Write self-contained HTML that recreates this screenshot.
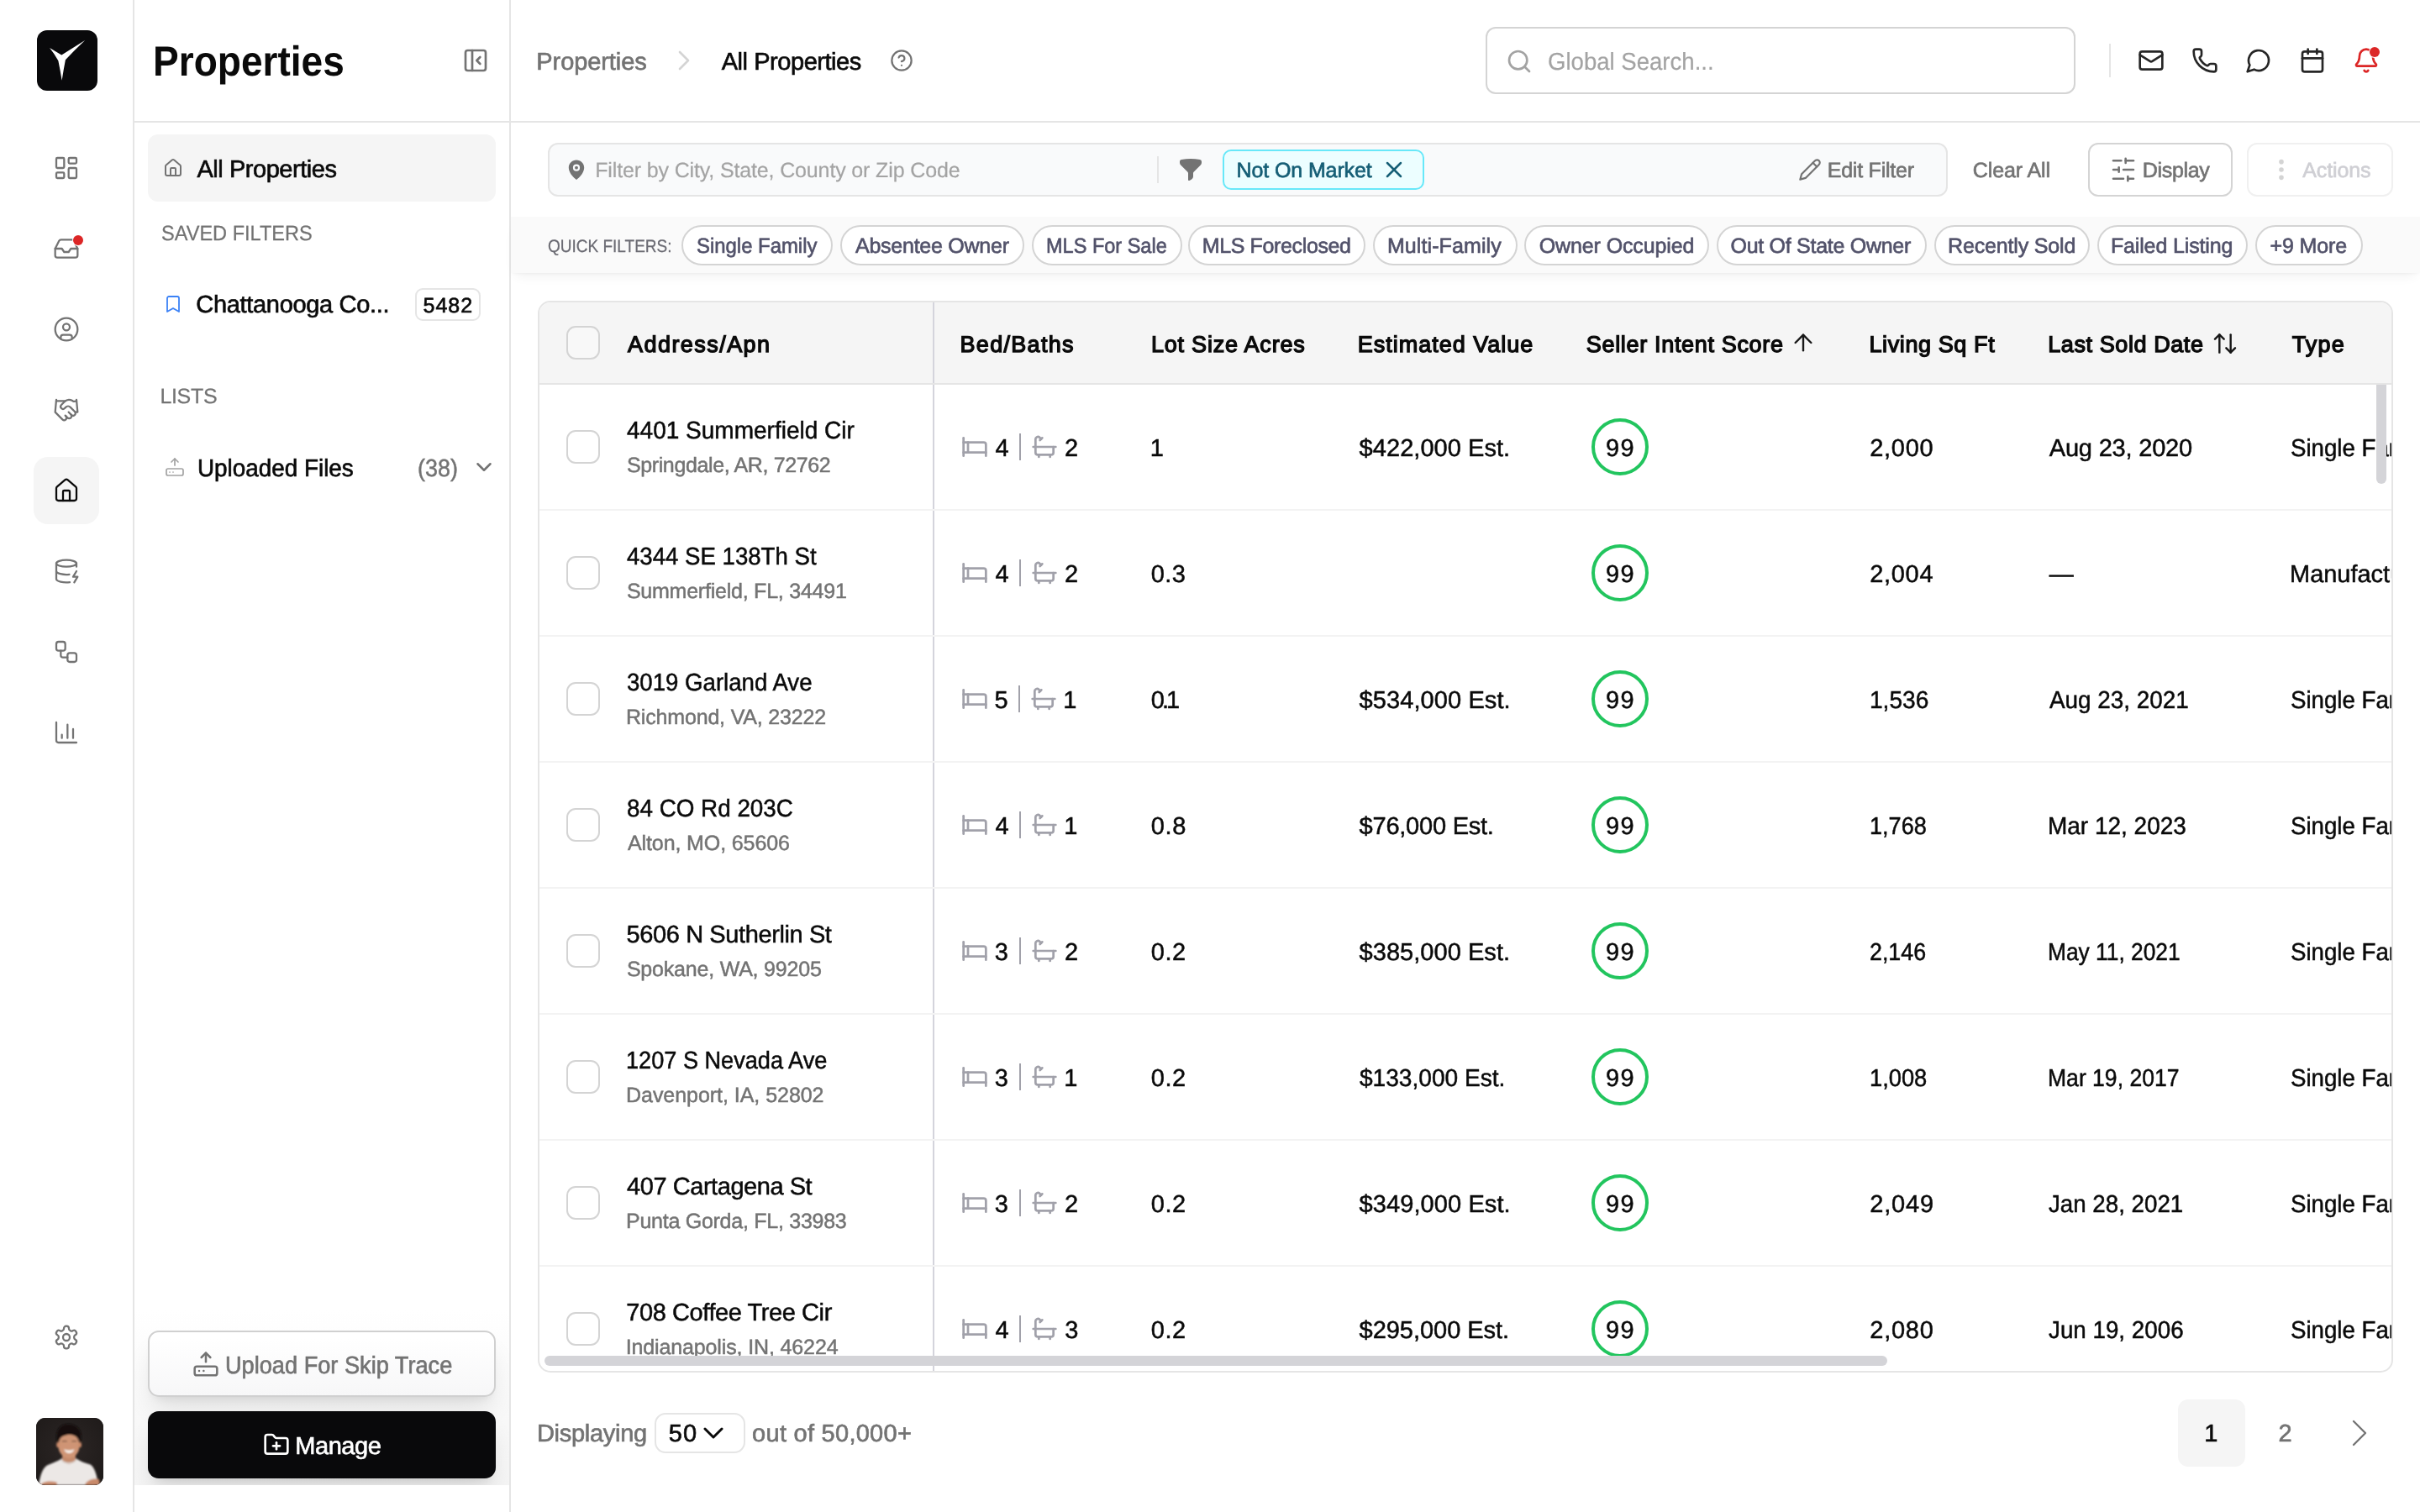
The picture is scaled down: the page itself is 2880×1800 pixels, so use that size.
<!DOCTYPE html>
<html lang="en">
<head>
<meta charset="utf-8">
<title>Properties - All Properties</title>
<style>
*{box-sizing:border-box;margin:0;padding:0}
html,body{width:2880px;height:1800px;overflow:hidden;background:#fff}
body{font-family:"Liberation Sans",sans-serif;color:#0a0a0a;position:relative;font-kerning:normal;text-rendering:geometricPrecision}
@media (max-width:1600px){html{zoom:.5}}
.t{position:absolute;white-space:pre;display:block}
.i,.b{position:absolute;display:block}
.i{overflow:visible}
section,aside,header,nav,main,footer{position:absolute;display:block}
nav,aside,header,main{will-change:transform}
</style>
</head>
<body>
<nav class="rail" style="left:0;top:0;width:160px;height:1800px;border-right:2px solid #e5e5e5;background:#fff">
<div class="b" style="left:44px;top:36px;width:72px;height:72px;background:#09090b;border-radius:12px"><svg viewBox="0 0 72 72" width="72" height="72" style="display:block"><path fill="#fff" d="M15.1 21 L29.3 29.6 L57.1 12.1 Q44.5 24 33.9 35.3 Q31.6 47 29.65 59.8 Q27.6 47 25.35 36.2 Q21 28.4 15.1 21 Z"/></svg></div>
<div class="b" style="left:40px;top:544px;width:78px;height:80px;background:#f5f5f5;border-radius:17px"></div>
<svg class="i" style="left:63.0px;top:184.0px;width:32px;height:32px;" viewBox="0 0 24 24" fill="none" stroke="#737373" stroke-width="1.7" stroke-linecap="round" stroke-linejoin="round"><rect width="7" height="9" x="3" y="3" rx="1"/><rect width="7" height="5" x="14" y="3" rx="1"/><rect width="7" height="9" x="14" y="12" rx="1"/><rect width="7" height="5" x="3" y="16" rx="1"/></svg>
<svg class="i" style="left:63.0px;top:280.0px;width:32px;height:32px;" viewBox="0 0 24 24" fill="none" stroke="#737373" stroke-width="1.7" stroke-linecap="round" stroke-linejoin="round"><polyline points="22 12 16 12 14 15 10 15 8 12 2 12"/><path d="M5.45 5.11 2 12v6a2 2 0 0 0 2 2h16a2 2 0 0 0 2-2v-6l-3.45-6.89A2 2 0 0 0 16.76 4H7.24a2 2 0 0 0-1.79 1.11z"/></svg>
<svg class="i" style="left:63.0px;top:376.0px;width:32px;height:32px;" viewBox="0 0 24 24" fill="none" stroke="#737373" stroke-width="1.7" stroke-linecap="round" stroke-linejoin="round"><circle cx="12" cy="12" r="10"/><circle cx="12" cy="10" r="3"/><path d="M7 20.662V19a2 2 0 0 1 2-2h6a2 2 0 0 1 2 2v1.662"/></svg>
<svg class="i" style="left:63.0px;top:472.0px;width:32px;height:32px;" viewBox="0 0 24 24" fill="none" stroke="#737373" stroke-width="1.7" stroke-linecap="round" stroke-linejoin="round"><path d="m11 17 2 2a1 1 0 1 0 3-3"/><path d="m14 14 2.5 2.5a1 1 0 1 0 3-3l-3.88-3.88a3 3 0 0 0-4.24 0l-.88.88a1 1 0 1 1-3-3l2.81-2.81a5.79 5.79 0 0 1 7.06-.87l.47.28a2 2 0 0 0 1.42.25L21 4"/><path d="m21 3 1 11h-2"/><path d="M3 3 2 14l6.5 6.5a1 1 0 1 0 3-3"/><path d="M3 4h8"/></svg>
<svg class="i" style="left:63.0px;top:568.0px;width:32px;height:32px;" viewBox="0 0 24 24" fill="none" stroke="#0a0a0a" stroke-width="1.7" stroke-linecap="round" stroke-linejoin="round"><path d="M15 21v-8a1 1 0 0 0-1-1h-4a1 1 0 0 0-1 1v8"/><path d="M3 10a2 2 0 0 1 .709-1.528l7-5.999a2 2 0 0 1 2.582 0l7 5.999A2 2 0 0 1 21 10v9a2 2 0 0 1-2 2H5a2 2 0 0 1-2-2z"/></svg>
<svg class="i" style="left:63.0px;top:664.0px;width:32px;height:32px;" viewBox="0 0 24 24" fill="none" stroke="#737373" stroke-width="1.7" stroke-linecap="round" stroke-linejoin="round"><ellipse cx="12" cy="5" rx="9" ry="3"/><path d="M3 5V19A9 3 0 0 0 15 21.84"/><path d="M21 5V8"/><path d="M21 12L18 17H22L19 22"/><path d="M3 12A9 3 0 0 0 14.59 14.87"/></svg>
<svg class="i" style="left:63.0px;top:760.0px;width:32px;height:32px;" viewBox="0 0 24 24" fill="none" stroke="#737373" stroke-width="1.7" stroke-linecap="round" stroke-linejoin="round"><rect width="8" height="8" x="3" y="3" rx="2"/><path d="M7 11v4a2 2 0 0 0 2 2h4"/><rect width="8" height="8" x="13" y="13" rx="2"/></svg>
<svg class="i" style="left:63.0px;top:856.0px;width:32px;height:32px;" viewBox="0 0 24 24" fill="none" stroke="#737373" stroke-width="1.7" stroke-linecap="round" stroke-linejoin="round"><path d="M3 3v16a2 2 0 0 0 2 2h16"/><path d="M18 17V9"/><path d="M13 17V5"/><path d="M8 17v-3"/></svg>
<div class="b" style="left:87px;top:280px;width:12px;height:12px;background:#dc2626;border-radius:50%;box-shadow:0 0 0 1px #fff"></div>
<svg class="i" style="left:63.0px;top:1576.0px;width:32px;height:32px;" viewBox="0 0 24 24" fill="none" stroke="#737373" stroke-width="1.7" stroke-linecap="round" stroke-linejoin="round"><path d="M12.22 2h-.44a2 2 0 0 0-2 2v.18a2 2 0 0 1-1 1.73l-.43.25a2 2 0 0 1-2 0l-.15-.08a2 2 0 0 0-2.73.73l-.22.38a2 2 0 0 0 .73 2.73l.15.1a2 2 0 0 1 1 1.72v.51a2 2 0 0 1-1 1.74l-.15.09a2 2 0 0 0-.73 2.73l.22.38a2 2 0 0 0 2.73.73l.15-.08a2 2 0 0 1 2 0l.43.25a2 2 0 0 1 1 1.73V20a2 2 0 0 0 2 2h.44a2 2 0 0 0 2-2v-.18a2 2 0 0 1 1-1.73l.43-.25a2 2 0 0 1 2 0l.15.08a2 2 0 0 0 2.73-.73l.22-.39a2 2 0 0 0-.73-2.73l-.15-.08a2 2 0 0 1-1-1.74v-.5a2 2 0 0 1 1-1.74l.15-.09a2 2 0 0 0 .73-2.73l-.22-.38a2 2 0 0 0-2.73-.73l-.15.08a2 2 0 0 1-2 0l-.43-.25a2 2 0 0 1-1-1.73V4a2 2 0 0 0-2-2z"/><circle cx="12" cy="12" r="3"/></svg>
<div class="b avatar" style="left:43px;top:1688px;width:80px;height:80px;border-radius:11px;overflow:hidden;background:#241f1e"><svg viewBox="0 0 80 80" width="80" height="80" style="display:block"><defs><radialGradient id="avbg" cx="50%" cy="45%" r="70%"><stop offset="0" stop-color="#2c2625"/><stop offset="1" stop-color="#1e1a19"/></radialGradient><filter id="avb" x="-10%" y="-10%" width="120%" height="120%"><feGaussianBlur stdDeviation="0.9"/></filter></defs><rect width="80" height="80" fill="url(#avbg)"/><g filter="url(#avb)"><path d="M3 80 C5 66 9 58 14 56 C21 53 27 51 30 48.500 L48 48.500 C52 51.500 58 53.500 64.500 55.500 C69 58 72 66 74 80 Z" fill="#ece8e6"/><path d="M31 44 h16 v6.500 c-3 5.500-13 5.500-16 0z" fill="#c48a6c"/><path d="M30 50 c4 5 13 5 18 0" stroke="#d9d2cd" stroke-width="1.600" fill="none"/><ellipse cx="39" cy="33" rx="12.600" ry="15" fill="#cf9474"/><ellipse cx="26" cy="32" rx="1.800" ry="3.200" fill="#c98868"/><ellipse cx="52.200" cy="32" rx="1.800" ry="3.200" fill="#c98868"/><path d="M25 30 C22 17 27 8 36 7.500 C44 6 53 11 53.500 20 C54 25 53 28 52.500 30 C51 24 47 20.500 41 20 C35 19.500 29 22 27.500 26 Z" fill="#14100f"/><path d="M33 37.200 q6.300 2.600 12.600 0 q-1.800 4.800 -6.300 4.800 q-4.500 0 -6.300 -4.800z" fill="#f6efe9"/><path d="M31 28 q3 -1 5.500 0 M42.500 28 q3 -1 5.500 0" stroke="#5a3d30" stroke-width="1.200" fill="none"/><path d="M5 80 C7 76 16 74 24.500 76.500 L25 80 Z M58 80 C60 74 68 71.500 75 73 L76 80 Z" fill="#c98a6a"/></g></svg></div>
</nav>
<aside class="sidebar" style="left:160px;top:0;width:448px;height:1800px;border-right:2px solid #e5e5e5;background:#fff">
<h1 class="t" style="left:21.7px;top:48px;font-size:50px;line-height:50px;color:#0a0a0a;font-weight:700;transform:scaleX(0.9209);transform-origin:0 0;">Properties</h1>
<svg class="i" style="left:390.0px;top:56.0px;width:32px;height:32px;" viewBox="0 0 24 24" fill="none" stroke="#737373" stroke-width="2" stroke-linecap="round" stroke-linejoin="round"><rect width="18" height="18" x="3" y="3" rx="2"/><path d="M9 3v18"/><path d="m16 15-3-3 3-3"/></svg>
<div class="b" style="left:16px;top:160px;width:414px;height:80px;background:#f5f5f5;border-radius:12px"></div>
<svg class="i" style="left:34.0px;top:188.0px;width:24px;height:24px;" viewBox="0 0 24 24" fill="none" stroke="#737373" stroke-width="2" stroke-linecap="round" stroke-linejoin="round"><path d="M15 21v-8a1 1 0 0 0-1-1h-4a1 1 0 0 0-1 1v8"/><path d="M3 10a2 2 0 0 1 .709-1.528l7-5.999a2 2 0 0 1 2.582 0l7 5.999A2 2 0 0 1 21 10v9a2 2 0 0 1-2 2H5a2 2 0 0 1-2-2z"/></svg>
<span class="t" style="left:74.4px;top:188px;font-size:29px;line-height:29px;color:#0a0a0a;letter-spacing:-0.45px;-webkit-text-stroke:0.65px currentColor;">All Properties</span>
<span class="t" style="left:31.6px;top:266px;font-size:25px;line-height:25px;color:#737373;-webkit-text-stroke:0.25px currentColor;transform:scaleX(0.9424);transform-origin:0 0;">SAVED FILTERS</span>
<svg class="i" style="left:34.0px;top:350.0px;width:24px;height:24px;" viewBox="0 0 24 24" fill="none" stroke="#3b82f6" stroke-width="1.8" stroke-linecap="round" stroke-linejoin="round"><path d="m19 21-7-4-7 4V5a2 2 0 0 1 2-2h10a2 2 0 0 1 2 2v16z"/></svg>
<span class="t" style="left:73.3px;top:349px;font-size:29px;line-height:29px;color:#0a0a0a;letter-spacing:-0.32px;-webkit-text-stroke:0.65px currentColor;">Chattanooga Co...</span>
<div class="b" style="left:334px;top:343px;width:78px;height:39px;border:2px solid #e5e5e5;border-radius:9px;background:#fff"></div>
<span class="t" style="left:343.5px;top:352px;font-size:25px;line-height:25px;color:#0a0a0a;letter-spacing:0.99px;-webkit-text-stroke:0.65px currentColor;">5482</span>
<span class="t" style="left:30.4px;top:460px;font-size:25px;line-height:25px;color:#737373;letter-spacing:-0.31px;-webkit-text-stroke:0.25px currentColor;">LISTS</span>
<svg class="i" style="left:36.0px;top:544.0px;width:24px;height:24px;" viewBox="0 0 24 24" fill="none" stroke="#a3a3a3" stroke-width="1.7" stroke-linecap="round" stroke-linejoin="round"><path d="m16 6-4-4-4 4"/><path d="M12 2v8"/><rect width="20" height="8" x="2" y="14" rx="2"/><path d="M6 18h.01"/><path d="M10 18h.01"/></svg>
<span class="t" style="left:75.0px;top:544px;font-size:29px;line-height:29px;color:#0a0a0a;-webkit-text-stroke:0.65px currentColor;transform:scaleX(0.9601);transform-origin:0 0;">Uploaded Files</span>
<span class="t" style="left:336.9px;top:544px;font-size:29px;line-height:29px;color:#737373;-webkit-text-stroke:0.5px currentColor;transform:scaleX(0.9282);transform-origin:0 0;">(38)</span>
<svg class="i" style="left:400.5px;top:541.0px;width:30px;height:30px;" viewBox="0 0 24 24" fill="none" stroke="#737373" stroke-width="2" stroke-linecap="round" stroke-linejoin="round"><path d="m6 9 6 6 6-6"/></svg>
<div class="b" style="left:0;top:1560px;width:446px;height:208px;overflow:hidden;background:linear-gradient(to bottom,rgba(245,245,245,0) 0,rgba(245,245,245,.55) 45%,#f5f5f5 100%)">
<div class="b" style="left:16px;top:24px;width:414px;height:79px;border:2px solid #d0d0d0;border-radius:13px;background:linear-gradient(to bottom,#fff 10%,#f7f7f8 100%);box-shadow:0 20px 30px -6px rgba(0,0,0,.10),0 8px 12px -8px rgba(0,0,0,.10)"></div>
<svg class="i" style="left:69.0px;top:48.0px;width:32px;height:32px;" viewBox="0 0 24 24" fill="none" stroke="#737373" stroke-width="1.9" stroke-linecap="round" stroke-linejoin="round"><path d="m16 6-4-4-4 4"/><path d="M12 2v8"/><rect width="20" height="8" x="2" y="14" rx="2"/><path d="M6 18h.01"/><path d="M10 18h.01"/></svg>
<span class="t" style="left:107.7px;top:52px;font-size:29px;line-height:29px;color:#737373;-webkit-text-stroke:0.65px currentColor;transform:scaleX(0.9368);transform-origin:0 0;">Upload For Skip Trace</span>
<div class="b" style="left:16px;top:120px;width:414px;height:80px;border-radius:13px;background:#09090b;box-shadow:0 20px 30px -6px rgba(0,0,0,.12),0 8px 12px -8px rgba(0,0,0,.12)"></div>
<svg class="i" style="left:153.0px;top:143.5px;width:32px;height:32px;" viewBox="0 0 24 24" fill="none" stroke="#fff" stroke-width="2" stroke-linecap="round" stroke-linejoin="round"><path d="M12 10v6"/><path d="M9 13h6"/><path d="M20 20a2 2 0 0 0 2-2V8a2 2 0 0 0-2-2h-7.9a2 2 0 0 1-1.69-.9L9.6 3.9A2 2 0 0 0 7.93 3H4a2 2 0 0 0-2 2v13a2 2 0 0 0 2 2Z"/></svg>
<span class="t" style="left:191.2px;top:148px;font-size:29px;line-height:29px;color:#fff;letter-spacing:-0.42px;-webkit-text-stroke:0.65px currentColor;">Manage</span>
</div>
</aside>
<header class="topbar" style="left:160px;top:0;width:2720px;height:146px;border-bottom:2px solid #e5e5e5">
<span class="t" style="left:478.3px;top:60px;font-size:29px;line-height:29px;color:#737373;letter-spacing:-0.08px;-webkit-text-stroke:0.65px currentColor;">Properties</span>
<svg class="i" style="left:633.8px;top:52.2px;width:40px;height:40px;" viewBox="0 0 24 24" fill="none" stroke="#d4d4d4" stroke-width="1.6" stroke-linecap="round" stroke-linejoin="round"><path d="m9 18 6-6-6-6"/></svg>
<span class="t" style="left:698.7px;top:60px;font-size:29px;line-height:29px;color:#0a0a0a;letter-spacing:-0.45px;-webkit-text-stroke:0.65px currentColor;">All Properties</span>
<svg class="i" style="left:899.0px;top:58.0px;width:28px;height:28px;" viewBox="0 0 24 24" fill="none" stroke="#737373" stroke-width="1.9" stroke-linecap="round" stroke-linejoin="round"><circle cx="12" cy="12" r="10"/><path d="M9.09 9a3 3 0 0 1 5.83 1c0 2-3 3-3 3"/><path d="M12 17h.01"/></svg>
<div class="b" style="left:1608px;top:32px;width:702px;height:80px;border:2px solid #d4d4d4;border-radius:12px;background:#fff"></div>
<svg class="i" style="left:1632.0px;top:56.5px;width:32px;height:32px;" viewBox="0 0 24 24" fill="none" stroke="#a3a3a3" stroke-width="2" stroke-linecap="round" stroke-linejoin="round"><circle cx="11" cy="11" r="8"/><path d="m21 21-4.3-4.3"/></svg>
<span class="t" style="left:1681.6px;top:60px;font-size:29px;line-height:29px;color:#a3a3a3;-webkit-text-stroke:0.2px currentColor;transform:scaleX(0.9503);transform-origin:0 0;">Global Search...</span>
<div class="b" style="left:2350px;top:52px;width:2px;height:40px;background:#e5e5e5"></div>
<svg class="i" style="left:2384.0px;top:56.0px;width:32px;height:32px;" viewBox="0 0 24 24" fill="none" stroke="#262626" stroke-width="2" stroke-linecap="round" stroke-linejoin="round"><rect width="20" height="16" x="2" y="4" rx="2"/><path d="m22 7-8.97 5.7a1.94 1.94 0 0 1-2.06 0L2 7"/></svg>
<svg class="i" style="left:2448.0px;top:56.0px;width:32px;height:32px;" viewBox="0 0 24 24" fill="none" stroke="#262626" stroke-width="2" stroke-linecap="round" stroke-linejoin="round"><path d="M13.832 16.568a1 1 0 0 0 1.213-.303l.355-.465A2 2 0 0 1 17 15h3a2 2 0 0 1 2 2v3a2 2 0 0 1-2 2A18 18 0 0 1 2 4a2 2 0 0 1 2-2h3a2 2 0 0 1 2 2v3a2 2 0 0 1-.8 1.6l-.468.351a1 1 0 0 0-.292 1.233 14 14 0 0 0 6.392 6.384"/></svg>
<svg class="i" style="left:2512.0px;top:56.0px;width:32px;height:32px;" viewBox="0 0 24 24" fill="none" stroke="#262626" stroke-width="2" stroke-linecap="round" stroke-linejoin="round"><path d="M7.9 20A9 9 0 1 0 4 16.1L2 22Z"/></svg>
<svg class="i" style="left:2576.0px;top:56.0px;width:32px;height:32px;" viewBox="0 0 24 24" fill="none" stroke="#262626" stroke-width="2" stroke-linecap="round" stroke-linejoin="round"><path d="M8 2v4"/><path d="M16 2v4"/><rect width="18" height="18" x="3" y="4" rx="2"/><path d="M3 10h18"/></svg>
<svg class="i" style="left:2640.0px;top:56.0px;width:32px;height:32px;" viewBox="0 0 24 24" fill="none" stroke="#dc2626" stroke-width="2" stroke-linecap="round" stroke-linejoin="round"><path d="M10.268 21a2 2 0 0 0 3.464 0"/><path d="M3.262 15.326A1 1 0 0 0 4 17h16a1 1 0 0 0 .74-1.673C19.41 13.956 18 12.499 18 8A6 6 0 0 0 6 8c0 4.499-1.411 5.956-2.738 7.326"/></svg>
<div class="b" style="left:2660px;top:56px;width:12px;height:12px;background:#dc2626;border-radius:50%;box-shadow:0 0 0 1px #fff"></div>
</header>
<main style="left:608px;top:146px;width:2272px;height:1654px;background:#fff">
<section class="filters" style="left:0;top:0;width:2272px;height:112px">
<div class="b" style="left:44px;top:24px;width:1666px;height:64px;border:2px solid #e5e5e5;border-radius:12px;background:#f9fafb"></div>
<svg class="i" style="left:66.0px;top:43.8px;width:24px;height:24px;" viewBox="0 0 24 24" fill="#737373"><path fill-rule="evenodd" clip-rule="evenodd" d="M12 0.6C6.9 0.6 2.8 4.7 2.8 9.8c0 3.5 2 6.9 4.2 9.5 1.8 2.1 3.6 3.6 4.3 4.1a1.1 1.1 0 0 0 1.4 0c.7-.5 2.5-2 4.300-4.100 2.200-2.600 4.200-6 4.200-9.500C21.2 4.700 17.100 .6 12 .6Zm0 13.2a4.100 4.100 0 1 0 0-8.200 4.100 4.100 0 0 0 0 8.200Z"/><circle cx="12" cy="9.700" r="1.900"/></svg>
<span class="t" style="left:100.2px;top:45px;font-size:25px;line-height:25px;color:#a3a3a3;letter-spacing:-0.14px;-webkit-text-stroke:0.2px currentColor;">Filter by City, State, County or Zip Code</span>
<div class="b" style="left:769px;top:40px;width:2px;height:32px;background:#e5e5e5"></div>
<svg class="i" style="left:793.0px;top:40.2px;width:32px;height:32px;" viewBox="0 0 24 24" fill="#737373"><path fill-rule="evenodd" clip-rule="evenodd" d="M3.792 2.938A49.069 49.069 0 0 1 12 2.25c2.797 0 5.54.236 8.209.688a1.857 1.857 0 0 1 1.541 1.836v1.044a3 3 0 0 1-.879 2.121l-6.182 6.182a1.5 1.5 0 0 0-.439 1.061v2.927a3 3 0 0 1-1.658 2.684l-1.757.878A.75.75 0 0 1 9.75 21v-5.818a1.5 1.5 0 0 0-.44-1.06L3.13 7.938a3 3 0 0 1-.879-2.121V4.774c0-.897.64-1.683 1.542-1.836Z"/></svg>
<div class="b" style="left:847px;top:32px;width:240px;height:48px;border:2px solid #67e8f9;border-radius:10px;background:#ecfeff"></div>
<span class="t" style="left:863.6px;top:45px;font-size:25px;line-height:25px;color:#155e75;letter-spacing:-0.12px;-webkit-text-stroke:0.65px currentColor;">Not On Market</span>
<svg class="i" style="left:1035.2px;top:40.3px;width:32px;height:32px;" viewBox="0 0 24 24" fill="none" stroke="#155e75" stroke-width="1.9" stroke-linecap="round" stroke-linejoin="round"><path d="M18 6 6 18"/><path d="m6 6 12 12"/></svg>
<svg class="i" style="left:1532.0px;top:42.0px;width:28px;height:28px;" viewBox="0 0 24 24" fill="none" stroke="#737373" stroke-width="1.9" stroke-linecap="round" stroke-linejoin="round"><path d="M17 3a2.85 2.83 0 1 1 4 4L7.5 20.5 2 22l1.5-5.5Z"/><path d="m15 5 4 4"/></svg>
<span class="t" style="left:1566.7px;top:45px;font-size:25px;line-height:25px;color:#737373;letter-spacing:-0.22px;-webkit-text-stroke:0.65px currentColor;">Edit Filter</span>
<span class="t" style="left:1739.8px;top:45px;font-size:25px;line-height:25px;color:#737373;letter-spacing:-0.1px;-webkit-text-stroke:0.65px currentColor;">Clear All</span>
<div class="b" style="left:1877px;top:24px;width:172px;height:64px;border:2px solid #d4d4d4;border-radius:12px;background:#fff"></div>
<svg class="i" style="left:1903.0px;top:40.0px;width:32px;height:32px;" viewBox="0 0 24 24" fill="none" stroke="#737373" stroke-width="1.9" stroke-linecap="round" stroke-linejoin="round"><line x1="21" x2="14" y1="4" y2="4"/><line x1="10" x2="3" y1="4" y2="4"/><line x1="21" x2="12" y1="12" y2="12"/><line x1="8" x2="3" y1="12" y2="12"/><line x1="21" x2="16" y1="20" y2="20"/><line x1="12" x2="3" y1="20" y2="20"/><line x1="14" x2="14" y1="2" y2="6"/><line x1="8" x2="8" y1="10" y2="14"/><line x1="16" x2="16" y1="18" y2="22"/></svg>
<span class="t" style="left:1941.8px;top:45px;font-size:25px;line-height:25px;color:#737373;letter-spacing:-0.32px;-webkit-text-stroke:0.65px currentColor;">Display</span>
<div class="b" style="left:2066px;top:24px;width:174px;height:64px;border:2px solid #f0f0f0;border-radius:12px;background:#fff"></div>
<svg class="i" style="left:2090.7px;top:40.0px;width:32px;height:32px;" viewBox="0 0 24 24" fill="none" stroke="#d4d4d4" stroke-width="2.2" stroke-linecap="round" stroke-linejoin="round"><circle cx="12" cy="12" r="1"/><circle cx="12" cy="5" r="1"/><circle cx="12" cy="19" r="1"/></svg>
<span class="t" style="left:2132.3px;top:45px;font-size:25px;line-height:25px;color:#cfcfd4;letter-spacing:-0.11px;-webkit-text-stroke:0.65px currentColor;">Actions</span>
</section>
<section class="quick" style="left:0;top:112px;width:2272px;height:67px;background:#fafafa;box-shadow:0 8px 14px -6px rgba(0,0,0,.07),0 2px 4px -2px rgba(0,0,0,.05)">
<span class="t" style="left:43.8px;top:25px;font-size:21px;line-height:21px;color:#6b6b73;-webkit-text-stroke:0.25px currentColor;transform:scaleX(0.9051);transform-origin:0 0;">QUICK FILTERS:</span>
<div class="b" style="left:202.5px;top:10px;width:180.5px;height:48px;border:2px solid #d4d4d4;border-radius:24px;background:#fff"></div>
<span class="t" style="left:220.5px;top:23px;font-size:25px;line-height:25px;color:#52526a;-webkit-text-stroke:0.65px currentColor;transform:scaleX(0.9557);transform-origin:0 0;">Single Family</span>
<div class="b" style="left:391.5px;top:10px;width:219.5px;height:48px;border:2px solid #d4d4d4;border-radius:24px;background:#fff"></div>
<span class="t" style="left:410.0px;top:23px;font-size:25px;line-height:25px;color:#52526a;letter-spacing:-0.25px;-webkit-text-stroke:0.65px currentColor;">Absentee Owner</span>
<div class="b" style="left:619.5px;top:10px;width:179.5px;height:48px;border:2px solid #d4d4d4;border-radius:24px;background:#fff"></div>
<span class="t" style="left:636.7px;top:23px;font-size:25px;line-height:25px;color:#52526a;-webkit-text-stroke:0.65px currentColor;transform:scaleX(0.9406);transform-origin:0 0;">MLS For Sale</span>
<div class="b" style="left:805.5px;top:10px;width:211.5px;height:48px;border:2px solid #d4d4d4;border-radius:24px;background:#fff"></div>
<span class="t" style="left:822.7px;top:23px;font-size:25px;line-height:25px;color:#52526a;letter-spacing:-0.36px;-webkit-text-stroke:0.65px currentColor;">MLS Foreclosed</span>
<div class="b" style="left:1025.5px;top:10px;width:172.5px;height:48px;border:2px solid #d4d4d4;border-radius:24px;background:#fff"></div>
<span class="t" style="left:1042.9px;top:23px;font-size:25px;line-height:25px;color:#52526a;letter-spacing:0.1px;-webkit-text-stroke:0.65px currentColor;">Multi-Family</span>
<div class="b" style="left:1205.5px;top:10px;width:220.5px;height:48px;border:2px solid #d4d4d4;border-radius:24px;background:#fff"></div>
<span class="t" style="left:1223.8px;top:23px;font-size:25px;line-height:25px;color:#52526a;letter-spacing:-0.12px;-webkit-text-stroke:0.65px currentColor;">Owner Occupied</span>
<div class="b" style="left:1434.5px;top:10px;width:250.5px;height:48px;border:2px solid #d4d4d4;border-radius:24px;background:#fff"></div>
<span class="t" style="left:1451.5px;top:23px;font-size:25px;line-height:25px;color:#52526a;letter-spacing:-0.28px;-webkit-text-stroke:0.65px currentColor;">Out Of State Owner</span>
<div class="b" style="left:1693.5px;top:10px;width:185.5px;height:48px;border:2px solid #d4d4d4;border-radius:24px;background:#fff"></div>
<span class="t" style="left:1710.0px;top:23px;font-size:25px;line-height:25px;color:#52526a;letter-spacing:-0.16px;-webkit-text-stroke:0.65px currentColor;">Recently Sold</span>
<div class="b" style="left:1887.5px;top:10px;width:179.5px;height:48px;border:2px solid #d4d4d4;border-radius:24px;background:#fff"></div>
<span class="t" style="left:1903.9px;top:23px;font-size:25px;line-height:25px;color:#52526a;letter-spacing:-0.14px;-webkit-text-stroke:0.65px currentColor;">Failed Listing</span>
<div class="b" style="left:2075.5px;top:10px;width:128.5px;height:48px;border:2px solid #d4d4d4;border-radius:24px;background:#fff"></div>
<span class="t" style="left:2093.4px;top:23px;font-size:25px;line-height:25px;color:#52526a;letter-spacing:-0.09px;-webkit-text-stroke:0.65px currentColor;">+9 More</span>
</section>
<section class="table" style="left:32px;top:212px;width:2208px;height:1276px;border:2px solid #e5e5e5;border-radius:15px;overflow:hidden;background:#fff">
<div class="b thead" style="left:0px;top:0px;width:2204px;height:98px;background:#f5f5f5;border-bottom:2px solid #e5e5e5"></div>
<div class="b" style="left:468px;top:0px;width:2px;height:96px;background:#d4d4dc"></div>
<div class="b" style="left:32px;top:28px;width:40px;height:40px;border:2px solid #d4d4d4;border-radius:11px;background:#f8f8f8"></div>
<span class="t th" style="left:105.0px;top:37px;font-size:27px;line-height:27px;color:#0a0a0a;letter-spacing:1.45px;-webkit-text-stroke:1.3px currentColor;">Address/Apn</span>
<span class="t th" style="left:500.5px;top:37px;font-size:27px;line-height:27px;color:#0a0a0a;letter-spacing:1.31px;-webkit-text-stroke:1.3px currentColor;">Bed/Baths</span>
<span class="t th" style="left:727.9px;top:37px;font-size:27px;line-height:27px;color:#0a0a0a;letter-spacing:0.79px;-webkit-text-stroke:1.3px currentColor;">Lot Size Acres</span>
<span class="t th" style="left:973.8px;top:37px;font-size:27px;line-height:27px;color:#0a0a0a;letter-spacing:0.99px;-webkit-text-stroke:1.3px currentColor;">Estimated Value</span>
<span class="t th" style="left:1245.8px;top:37px;font-size:27px;line-height:27px;color:#0a0a0a;letter-spacing:0.67px;-webkit-text-stroke:1.3px currentColor;">Seller Intent Score</span>
<span class="t th" style="left:1582.5px;top:37px;font-size:27px;line-height:27px;color:#0a0a0a;letter-spacing:0.6px;-webkit-text-stroke:1.3px currentColor;">Living Sq Ft</span>
<span class="t th" style="left:1795.2px;top:37px;font-size:27px;line-height:27px;color:#0a0a0a;letter-spacing:0.59px;-webkit-text-stroke:1.3px currentColor;">Last Sold Date</span>
<span class="t th" style="left:2085.7px;top:37px;font-size:27px;line-height:27px;color:#0a0a0a;letter-spacing:1.15px;-webkit-text-stroke:1.3px currentColor;">Type</span>
<svg class="i" style="left:1488.4px;top:32.2px;width:32px;height:32px;" viewBox="0 0 24 24" fill="none" stroke="#171717" stroke-width="1.8" stroke-linecap="round" stroke-linejoin="round"><path d="m5 12 7-7 7 7"/><path d="M12 19V5"/></svg>
<svg class="i" style="left:1989.5px;top:32.7px;width:32px;height:32px;" viewBox="0 0 24 24" fill="none" stroke="#171717" stroke-width="1.8" stroke-linecap="round" stroke-linejoin="round"><path d="m21 16-4 4-4-4"/><path d="M17 20V4"/><path d="m3 8 4-4 4 4"/><path d="M7 4v16"/></svg>
<div class="b row" style="left:0;top:98px;width:2204px;height:150px;border-bottom:2px solid #f3f3f3">
<div class="b" style="left:468px;top:0px;width:2px;height:148px;background:#d4d4dc"></div>
<div class="b" style="left:32px;top:54px;width:40px;height:40px;border:2px solid #d4d4d4;border-radius:11px;background:#fff"></div>
<span class="t" style="left:104.1px;top:41px;font-size:29px;line-height:29px;color:#0a0a0a;-webkit-text-stroke:0.5px currentColor;transform:scaleX(0.966);transform-origin:0 0;">4401 Summerfield Cir</span>
<span class="t" style="left:103.9px;top:84px;font-size:25px;line-height:25px;color:#737373;letter-spacing:-0.37px;-webkit-text-stroke:0.5px currentColor;">Springdale, AR, 72762</span>
<svg class="i" style="left:502.0px;top:58.0px;width:32px;height:32px;" viewBox="0 0 24 24" fill="none" stroke="#a1a1aa" stroke-width="2.05" stroke-linecap="round" stroke-linejoin="round"><path d="M2 4v16"/><path d="M2 8h18a2 2 0 0 1 2 2v10"/><path d="M2 17h20"/><path d="M6 8v9"/></svg>
<span class="t" style="left:542.5px;top:62px;font-size:29px;line-height:29px;color:#0a0a0a;-webkit-text-stroke:0.5px currentColor;">4</span>
<div class="b" style="left:571px;top:58px;width:2px;height:32px;background:#a1a1aa"></div>
<svg class="i" style="left:585.3px;top:58.0px;width:32px;height:32px;" viewBox="0 0 24 24" fill="none" stroke="#a1a1aa" stroke-width="2.05" stroke-linecap="round" stroke-linejoin="round"><path d="M10 4 8 6"/><path d="M17 19v2"/><path d="M2 12h20"/><path d="M7 19v2"/><path d="M9 5 7.621 3.621A2.121 2.121 0 0 0 4 5v12a2 2 0 0 0 2 2h12a2 2 0 0 0 2-2v-5"/></svg>
<span class="t" style="left:625.0px;top:62px;font-size:29px;line-height:29px;color:#0a0a0a;-webkit-text-stroke:0.5px currentColor;">2</span>
<span class="t" style="left:726.7px;top:62px;font-size:29px;line-height:29px;color:#0a0a0a;-webkit-text-stroke:0.5px currentColor;">1</span>
<span class="t" style="left:975.6px;top:62px;font-size:29px;line-height:29px;color:#0a0a0a;letter-spacing:0.05px;-webkit-text-stroke:0.5px currentColor;">$422,000 Est.</span>
<div class="b" style="left:1252px;top:40px;width:68px;height:68px;border:4.5px solid #22c55e;border-radius:50%"></div>
<span class="t" style="left:1269.1px;top:62px;font-size:29px;line-height:29px;color:#0a0a0a;letter-spacing:1.27px;-webkit-text-stroke:0.5px currentColor;">99</span>
<span class="t" style="left:1583.3px;top:62px;font-size:29px;line-height:29px;color:#0a0a0a;letter-spacing:0.68px;-webkit-text-stroke:0.5px currentColor;">2,000</span>
<span class="t" style="left:1796.8px;top:62px;font-size:29px;line-height:29px;color:#0a0a0a;letter-spacing:-0.2px;-webkit-text-stroke:0.5px currentColor;">Aug 23, 2020</span>
<span class="t" style="left:2084.3px;top:62px;font-size:29px;line-height:29px;color:#0a0a0a;-webkit-text-stroke:0.5px currentColor;transform:scaleX(0.9539);transform-origin:0 0;">Single Family</span>
</div>
<div class="b row" style="left:0;top:248px;width:2204px;height:150px;border-bottom:2px solid #f3f3f3">
<div class="b" style="left:468px;top:0px;width:2px;height:148px;background:#d4d4dc"></div>
<div class="b" style="left:32px;top:54px;width:40px;height:40px;border:2px solid #d4d4d4;border-radius:11px;background:#fff"></div>
<span class="t" style="left:104.1px;top:41px;font-size:29px;line-height:29px;color:#0a0a0a;-webkit-text-stroke:0.5px currentColor;transform:scaleX(0.9517);transform-origin:0 0;">4344 SE 138Th St</span>
<span class="t" style="left:103.9px;top:84px;font-size:25px;line-height:25px;color:#737373;letter-spacing:-0.23px;-webkit-text-stroke:0.5px currentColor;">Summerfield, FL, 34491</span>
<svg class="i" style="left:502.0px;top:58.0px;width:32px;height:32px;" viewBox="0 0 24 24" fill="none" stroke="#a1a1aa" stroke-width="2.05" stroke-linecap="round" stroke-linejoin="round"><path d="M2 4v16"/><path d="M2 8h18a2 2 0 0 1 2 2v10"/><path d="M2 17h20"/><path d="M6 8v9"/></svg>
<span class="t" style="left:542.5px;top:62px;font-size:29px;line-height:29px;color:#0a0a0a;-webkit-text-stroke:0.5px currentColor;">4</span>
<div class="b" style="left:571px;top:58px;width:2px;height:32px;background:#a1a1aa"></div>
<svg class="i" style="left:585.3px;top:58.0px;width:32px;height:32px;" viewBox="0 0 24 24" fill="none" stroke="#a1a1aa" stroke-width="2.05" stroke-linecap="round" stroke-linejoin="round"><path d="M10 4 8 6"/><path d="M17 19v2"/><path d="M2 12h20"/><path d="M7 19v2"/><path d="M9 5 7.621 3.621A2.121 2.121 0 0 0 4 5v12a2 2 0 0 0 2 2h12a2 2 0 0 0 2-2v-5"/></svg>
<span class="t" style="left:625.0px;top:62px;font-size:29px;line-height:29px;color:#0a0a0a;-webkit-text-stroke:0.5px currentColor;">2</span>
<span class="t" style="left:727.8px;top:62px;font-size:29px;line-height:29px;color:#0a0a0a;letter-spacing:0.39px;-webkit-text-stroke:0.5px currentColor;">0.3</span>
<div class="b" style="left:1252px;top:40px;width:68px;height:68px;border:4.5px solid #22c55e;border-radius:50%"></div>
<span class="t" style="left:1269.1px;top:62px;font-size:29px;line-height:29px;color:#0a0a0a;letter-spacing:1.27px;-webkit-text-stroke:0.5px currentColor;">99</span>
<span class="t" style="left:1583.3px;top:62px;font-size:29px;line-height:29px;color:#0a0a0a;letter-spacing:0.66px;-webkit-text-stroke:0.5px currentColor;">2,004</span>
<span class="t" style="left:1796.8px;top:62px;font-size:29px;line-height:29px;color:#0a0a0a;-webkit-text-stroke:0.5px currentColor;">—</span>
<span class="t" style="left:2083.2px;top:62px;font-size:29px;line-height:29px;color:#0a0a0a;-webkit-text-stroke:0.5px currentColor;transform:scaleX(0.9988);transform-origin:0 0;">Manufactured</span>
</div>
<div class="b row" style="left:0;top:398px;width:2204px;height:150px;border-bottom:2px solid #f3f3f3">
<div class="b" style="left:468px;top:0px;width:2px;height:148px;background:#d4d4dc"></div>
<div class="b" style="left:32px;top:54px;width:40px;height:40px;border:2px solid #d4d4d4;border-radius:11px;background:#fff"></div>
<span class="t" style="left:103.7px;top:41px;font-size:29px;line-height:29px;color:#0a0a0a;-webkit-text-stroke:0.5px currentColor;transform:scaleX(0.9518);transform-origin:0 0;">3019 Garland Ave</span>
<span class="t" style="left:103.0px;top:84px;font-size:25px;line-height:25px;color:#737373;letter-spacing:-0.18px;-webkit-text-stroke:0.5px currentColor;">Richmond, VA, 23222</span>
<svg class="i" style="left:502.0px;top:58.0px;width:32px;height:32px;" viewBox="0 0 24 24" fill="none" stroke="#a1a1aa" stroke-width="2.05" stroke-linecap="round" stroke-linejoin="round"><path d="M2 4v16"/><path d="M2 8h18a2 2 0 0 1 2 2v10"/><path d="M2 17h20"/><path d="M6 8v9"/></svg>
<span class="t" style="left:541.5px;top:62px;font-size:29px;line-height:29px;color:#0a0a0a;-webkit-text-stroke:0.5px currentColor;">5</span>
<div class="b" style="left:570px;top:58px;width:2px;height:32px;background:#a1a1aa"></div>
<svg class="i" style="left:584.3px;top:58.0px;width:32px;height:32px;" viewBox="0 0 24 24" fill="none" stroke="#a1a1aa" stroke-width="2.05" stroke-linecap="round" stroke-linejoin="round"><path d="M10 4 8 6"/><path d="M17 19v2"/><path d="M2 12h20"/><path d="M7 19v2"/><path d="M9 5 7.621 3.621A2.121 2.121 0 0 0 4 5v12a2 2 0 0 0 2 2h12a2 2 0 0 0 2-2v-5"/></svg>
<span class="t" style="left:623.2px;top:62px;font-size:29px;line-height:29px;color:#0a0a0a;-webkit-text-stroke:0.5px currentColor;">1</span>
<span class="t" style="left:727.8px;top:62px;font-size:29px;line-height:29px;color:#0a0a0a;letter-spacing:-2.94px;-webkit-text-stroke:0.5px currentColor;">0.1</span>
<span class="t" style="left:975.6px;top:62px;font-size:29px;line-height:29px;color:#0a0a0a;letter-spacing:0.09px;-webkit-text-stroke:0.5px currentColor;">$534,000 Est.</span>
<div class="b" style="left:1252px;top:40px;width:68px;height:68px;border:4.5px solid #22c55e;border-radius:50%"></div>
<span class="t" style="left:1269.1px;top:62px;font-size:29px;line-height:29px;color:#0a0a0a;letter-spacing:1.27px;-webkit-text-stroke:0.5px currentColor;">99</span>
<span class="t" style="left:1582.6px;top:62px;font-size:29px;line-height:29px;color:#0a0a0a;-webkit-text-stroke:0.5px currentColor;transform:scaleX(0.9685);transform-origin:0 0;">1,536</span>
<span class="t" style="left:1796.8px;top:62px;font-size:29px;line-height:29px;color:#0a0a0a;-webkit-text-stroke:0.5px currentColor;transform:scaleX(0.9605);transform-origin:0 0;">Aug 23, 2021</span>
<span class="t" style="left:2084.3px;top:62px;font-size:29px;line-height:29px;color:#0a0a0a;-webkit-text-stroke:0.5px currentColor;transform:scaleX(0.9539);transform-origin:0 0;">Single Family</span>
</div>
<div class="b row" style="left:0;top:548px;width:2204px;height:150px;border-bottom:2px solid #f3f3f3">
<div class="b" style="left:468px;top:0px;width:2px;height:148px;background:#d4d4dc"></div>
<div class="b" style="left:32px;top:54px;width:40px;height:40px;border:2px solid #d4d4d4;border-radius:11px;background:#fff"></div>
<span class="t" style="left:103.5px;top:41px;font-size:29px;line-height:29px;color:#0a0a0a;-webkit-text-stroke:0.5px currentColor;transform:scaleX(0.9591);transform-origin:0 0;">84 CO Rd 203C</span>
<span class="t" style="left:105.0px;top:84px;font-size:25px;line-height:25px;color:#737373;letter-spacing:-0.11px;-webkit-text-stroke:0.5px currentColor;">Alton, MO, 65606</span>
<svg class="i" style="left:502.0px;top:58.0px;width:32px;height:32px;" viewBox="0 0 24 24" fill="none" stroke="#a1a1aa" stroke-width="2.05" stroke-linecap="round" stroke-linejoin="round"><path d="M2 4v16"/><path d="M2 8h18a2 2 0 0 1 2 2v10"/><path d="M2 17h20"/><path d="M6 8v9"/></svg>
<span class="t" style="left:542.5px;top:62px;font-size:29px;line-height:29px;color:#0a0a0a;-webkit-text-stroke:0.5px currentColor;">4</span>
<div class="b" style="left:571px;top:58px;width:2px;height:32px;background:#a1a1aa"></div>
<svg class="i" style="left:585.3px;top:58.0px;width:32px;height:32px;" viewBox="0 0 24 24" fill="none" stroke="#a1a1aa" stroke-width="2.05" stroke-linecap="round" stroke-linejoin="round"><path d="M10 4 8 6"/><path d="M17 19v2"/><path d="M2 12h20"/><path d="M7 19v2"/><path d="M9 5 7.621 3.621A2.121 2.121 0 0 0 4 5v12a2 2 0 0 0 2 2h12a2 2 0 0 0 2-2v-5"/></svg>
<span class="t" style="left:624.2px;top:62px;font-size:29px;line-height:29px;color:#0a0a0a;-webkit-text-stroke:0.5px currentColor;">1</span>
<span class="t" style="left:727.8px;top:62px;font-size:29px;line-height:29px;color:#0a0a0a;letter-spacing:0.58px;-webkit-text-stroke:0.5px currentColor;">0.8</span>
<span class="t" style="left:975.6px;top:62px;font-size:29px;line-height:29px;color:#0a0a0a;letter-spacing:-0.23px;-webkit-text-stroke:0.5px currentColor;">$76,000 Est.</span>
<div class="b" style="left:1252px;top:40px;width:68px;height:68px;border:4.5px solid #22c55e;border-radius:50%"></div>
<span class="t" style="left:1269.1px;top:62px;font-size:29px;line-height:29px;color:#0a0a0a;letter-spacing:1.27px;-webkit-text-stroke:0.5px currentColor;">99</span>
<span class="t" style="left:1582.7px;top:62px;font-size:29px;line-height:29px;color:#0a0a0a;-webkit-text-stroke:0.5px currentColor;transform:scaleX(0.9338);transform-origin:0 0;">1,768</span>
<span class="t" style="left:1794.5px;top:62px;font-size:29px;line-height:29px;color:#0a0a0a;-webkit-text-stroke:0.5px currentColor;transform:scaleX(0.9646);transform-origin:0 0;">Mar 12, 2023</span>
<span class="t" style="left:2084.3px;top:62px;font-size:29px;line-height:29px;color:#0a0a0a;-webkit-text-stroke:0.5px currentColor;transform:scaleX(0.9539);transform-origin:0 0;">Single Family</span>
</div>
<div class="b row" style="left:0;top:698px;width:2204px;height:150px;border-bottom:2px solid #f3f3f3">
<div class="b" style="left:468px;top:0px;width:2px;height:148px;background:#d4d4dc"></div>
<div class="b" style="left:32px;top:54px;width:40px;height:40px;border:2px solid #d4d4d4;border-radius:11px;background:#fff"></div>
<span class="t" style="left:103.6px;top:41px;font-size:29px;line-height:29px;color:#0a0a0a;letter-spacing:-0.4px;-webkit-text-stroke:0.5px currentColor;">5606 N Sutherlin St</span>
<span class="t" style="left:103.9px;top:84px;font-size:25px;line-height:25px;color:#737373;letter-spacing:-0.2px;-webkit-text-stroke:0.5px currentColor;">Spokane, WA, 99205</span>
<svg class="i" style="left:502.0px;top:58.0px;width:32px;height:32px;" viewBox="0 0 24 24" fill="none" stroke="#a1a1aa" stroke-width="2.05" stroke-linecap="round" stroke-linejoin="round"><path d="M2 4v16"/><path d="M2 8h18a2 2 0 0 1 2 2v10"/><path d="M2 17h20"/><path d="M6 8v9"/></svg>
<span class="t" style="left:541.7px;top:62px;font-size:29px;line-height:29px;color:#0a0a0a;-webkit-text-stroke:0.5px currentColor;">3</span>
<div class="b" style="left:571px;top:58px;width:2px;height:32px;background:#a1a1aa"></div>
<svg class="i" style="left:585.3px;top:58.0px;width:32px;height:32px;" viewBox="0 0 24 24" fill="none" stroke="#a1a1aa" stroke-width="2.05" stroke-linecap="round" stroke-linejoin="round"><path d="M10 4 8 6"/><path d="M17 19v2"/><path d="M2 12h20"/><path d="M7 19v2"/><path d="M9 5 7.621 3.621A2.121 2.121 0 0 0 4 5v12a2 2 0 0 0 2 2h12a2 2 0 0 0 2-2v-5"/></svg>
<span class="t" style="left:625.0px;top:62px;font-size:29px;line-height:29px;color:#0a0a0a;-webkit-text-stroke:0.5px currentColor;">2</span>
<span class="t" style="left:727.8px;top:62px;font-size:29px;line-height:29px;color:#0a0a0a;letter-spacing:0.48px;-webkit-text-stroke:0.5px currentColor;">0.2</span>
<span class="t" style="left:975.6px;top:62px;font-size:29px;line-height:29px;color:#0a0a0a;letter-spacing:0.04px;-webkit-text-stroke:0.5px currentColor;">$385,000 Est.</span>
<div class="b" style="left:1252px;top:40px;width:68px;height:68px;border:4.5px solid #22c55e;border-radius:50%"></div>
<span class="t" style="left:1269.1px;top:62px;font-size:29px;line-height:29px;color:#0a0a0a;letter-spacing:1.27px;-webkit-text-stroke:0.5px currentColor;">99</span>
<span class="t" style="left:1583.4px;top:62px;font-size:29px;line-height:29px;color:#0a0a0a;-webkit-text-stroke:0.5px currentColor;transform:scaleX(0.924);transform-origin:0 0;">2,146</span>
<span class="t" style="left:1794.7px;top:62px;font-size:29px;line-height:29px;color:#0a0a0a;-webkit-text-stroke:0.5px currentColor;transform:scaleX(0.9079);transform-origin:0 0;">May 11, 2021</span>
<span class="t" style="left:2084.3px;top:62px;font-size:29px;line-height:29px;color:#0a0a0a;-webkit-text-stroke:0.5px currentColor;transform:scaleX(0.9539);transform-origin:0 0;">Single Family</span>
</div>
<div class="b row" style="left:0;top:848px;width:2204px;height:150px;border-bottom:2px solid #f3f3f3">
<div class="b" style="left:468px;top:0px;width:2px;height:148px;background:#d4d4dc"></div>
<div class="b" style="left:32px;top:54px;width:40px;height:40px;border:2px solid #d4d4d4;border-radius:11px;background:#fff"></div>
<span class="t" style="left:102.7px;top:41px;font-size:29px;line-height:29px;color:#0a0a0a;-webkit-text-stroke:0.5px currentColor;transform:scaleX(0.9354);transform-origin:0 0;">1207 S Nevada Ave</span>
<span class="t" style="left:103.0px;top:84px;font-size:25px;line-height:25px;color:#737373;letter-spacing:-0.04px;-webkit-text-stroke:0.5px currentColor;">Davenport, IA, 52802</span>
<svg class="i" style="left:502.0px;top:58.0px;width:32px;height:32px;" viewBox="0 0 24 24" fill="none" stroke="#a1a1aa" stroke-width="2.05" stroke-linecap="round" stroke-linejoin="round"><path d="M2 4v16"/><path d="M2 8h18a2 2 0 0 1 2 2v10"/><path d="M2 17h20"/><path d="M6 8v9"/></svg>
<span class="t" style="left:541.7px;top:62px;font-size:29px;line-height:29px;color:#0a0a0a;-webkit-text-stroke:0.5px currentColor;">3</span>
<div class="b" style="left:571px;top:58px;width:2px;height:32px;background:#a1a1aa"></div>
<svg class="i" style="left:585.3px;top:58.0px;width:32px;height:32px;" viewBox="0 0 24 24" fill="none" stroke="#a1a1aa" stroke-width="2.05" stroke-linecap="round" stroke-linejoin="round"><path d="M10 4 8 6"/><path d="M17 19v2"/><path d="M2 12h20"/><path d="M7 19v2"/><path d="M9 5 7.621 3.621A2.121 2.121 0 0 0 4 5v12a2 2 0 0 0 2 2h12a2 2 0 0 0 2-2v-5"/></svg>
<span class="t" style="left:624.2px;top:62px;font-size:29px;line-height:29px;color:#0a0a0a;-webkit-text-stroke:0.5px currentColor;">1</span>
<span class="t" style="left:727.8px;top:62px;font-size:29px;line-height:29px;color:#0a0a0a;letter-spacing:0.48px;-webkit-text-stroke:0.5px currentColor;">0.2</span>
<span class="t" style="left:975.6px;top:62px;font-size:29px;line-height:29px;color:#0a0a0a;-webkit-text-stroke:0.5px currentColor;transform:scaleX(0.9687);transform-origin:0 0;">$133,000 Est.</span>
<div class="b" style="left:1252px;top:40px;width:68px;height:68px;border:4.5px solid #22c55e;border-radius:50%"></div>
<span class="t" style="left:1269.1px;top:62px;font-size:29px;line-height:29px;color:#0a0a0a;letter-spacing:1.27px;-webkit-text-stroke:0.5px currentColor;">99</span>
<span class="t" style="left:1582.7px;top:62px;font-size:29px;line-height:29px;color:#0a0a0a;-webkit-text-stroke:0.5px currentColor;transform:scaleX(0.941);transform-origin:0 0;">1,008</span>
<span class="t" style="left:1794.7px;top:62px;font-size:29px;line-height:29px;color:#0a0a0a;-webkit-text-stroke:0.5px currentColor;transform:scaleX(0.9155);transform-origin:0 0;">Mar 19, 2017</span>
<span class="t" style="left:2084.3px;top:62px;font-size:29px;line-height:29px;color:#0a0a0a;-webkit-text-stroke:0.5px currentColor;transform:scaleX(0.9539);transform-origin:0 0;">Single Family</span>
</div>
<div class="b row" style="left:0;top:998px;width:2204px;height:150px;border-bottom:2px solid #f3f3f3">
<div class="b" style="left:468px;top:0px;width:2px;height:148px;background:#d4d4dc"></div>
<div class="b" style="left:32px;top:54px;width:40px;height:40px;border:2px solid #d4d4d4;border-radius:11px;background:#fff"></div>
<span class="t" style="left:104.1px;top:41px;font-size:29px;line-height:29px;color:#0a0a0a;letter-spacing:-0.45px;-webkit-text-stroke:0.5px currentColor;">407 Cartagena St</span>
<span class="t" style="left:103.0px;top:84px;font-size:25px;line-height:25px;color:#737373;letter-spacing:-0.26px;-webkit-text-stroke:0.5px currentColor;">Punta Gorda, FL, 33983</span>
<svg class="i" style="left:502.0px;top:58.0px;width:32px;height:32px;" viewBox="0 0 24 24" fill="none" stroke="#a1a1aa" stroke-width="2.05" stroke-linecap="round" stroke-linejoin="round"><path d="M2 4v16"/><path d="M2 8h18a2 2 0 0 1 2 2v10"/><path d="M2 17h20"/><path d="M6 8v9"/></svg>
<span class="t" style="left:541.7px;top:62px;font-size:29px;line-height:29px;color:#0a0a0a;-webkit-text-stroke:0.5px currentColor;">3</span>
<div class="b" style="left:571px;top:58px;width:2px;height:32px;background:#a1a1aa"></div>
<svg class="i" style="left:585.3px;top:58.0px;width:32px;height:32px;" viewBox="0 0 24 24" fill="none" stroke="#a1a1aa" stroke-width="2.05" stroke-linecap="round" stroke-linejoin="round"><path d="M10 4 8 6"/><path d="M17 19v2"/><path d="M2 12h20"/><path d="M7 19v2"/><path d="M9 5 7.621 3.621A2.121 2.121 0 0 0 4 5v12a2 2 0 0 0 2 2h12a2 2 0 0 0 2-2v-5"/></svg>
<span class="t" style="left:625.0px;top:62px;font-size:29px;line-height:29px;color:#0a0a0a;-webkit-text-stroke:0.5px currentColor;">2</span>
<span class="t" style="left:727.8px;top:62px;font-size:29px;line-height:29px;color:#0a0a0a;letter-spacing:0.48px;-webkit-text-stroke:0.5px currentColor;">0.2</span>
<span class="t" style="left:975.6px;top:62px;font-size:29px;line-height:29px;color:#0a0a0a;letter-spacing:0.09px;-webkit-text-stroke:0.5px currentColor;">$349,000 Est.</span>
<div class="b" style="left:1252px;top:40px;width:68px;height:68px;border:4.5px solid #22c55e;border-radius:50%"></div>
<span class="t" style="left:1269.1px;top:62px;font-size:29px;line-height:29px;color:#0a0a0a;letter-spacing:1.27px;-webkit-text-stroke:0.5px currentColor;">99</span>
<span class="t" style="left:1583.3px;top:62px;font-size:29px;line-height:29px;color:#0a0a0a;letter-spacing:0.79px;-webkit-text-stroke:0.5px currentColor;">2,049</span>
<span class="t" style="left:1796.4px;top:62px;font-size:29px;line-height:29px;color:#0a0a0a;-webkit-text-stroke:0.5px currentColor;transform:scaleX(0.9553);transform-origin:0 0;">Jan 28, 2021</span>
<span class="t" style="left:2084.3px;top:62px;font-size:29px;line-height:29px;color:#0a0a0a;-webkit-text-stroke:0.5px currentColor;transform:scaleX(0.9539);transform-origin:0 0;">Single Family</span>
</div>
<div class="b row" style="left:0;top:1148px;width:2204px;height:150px;border-bottom:2px solid #f3f3f3">
<div class="b" style="left:468px;top:0px;width:2px;height:148px;background:#d4d4dc"></div>
<div class="b" style="left:32px;top:54px;width:40px;height:40px;border:2px solid #d4d4d4;border-radius:11px;background:#fff"></div>
<span class="t" style="left:103.3px;top:41px;font-size:29px;line-height:29px;color:#0a0a0a;letter-spacing:-0.42px;-webkit-text-stroke:0.5px currentColor;">708 Coffee Tree Cir</span>
<span class="t" style="left:102.7px;top:84px;font-size:25px;line-height:25px;color:#737373;letter-spacing:-0.13px;-webkit-text-stroke:0.5px currentColor;">Indianapolis, IN, 46224</span>
<svg class="i" style="left:502.0px;top:58.0px;width:32px;height:32px;" viewBox="0 0 24 24" fill="none" stroke="#a1a1aa" stroke-width="2.05" stroke-linecap="round" stroke-linejoin="round"><path d="M2 4v16"/><path d="M2 8h18a2 2 0 0 1 2 2v10"/><path d="M2 17h20"/><path d="M6 8v9"/></svg>
<span class="t" style="left:542.5px;top:62px;font-size:29px;line-height:29px;color:#0a0a0a;-webkit-text-stroke:0.5px currentColor;">4</span>
<div class="b" style="left:571px;top:58px;width:2px;height:32px;background:#a1a1aa"></div>
<svg class="i" style="left:585.3px;top:58.0px;width:32px;height:32px;" viewBox="0 0 24 24" fill="none" stroke="#a1a1aa" stroke-width="2.05" stroke-linecap="round" stroke-linejoin="round"><path d="M10 4 8 6"/><path d="M17 19v2"/><path d="M2 12h20"/><path d="M7 19v2"/><path d="M9 5 7.621 3.621A2.121 2.121 0 0 0 4 5v12a2 2 0 0 0 2 2h12a2 2 0 0 0 2-2v-5"/></svg>
<span class="t" style="left:625.3px;top:62px;font-size:29px;line-height:29px;color:#0a0a0a;-webkit-text-stroke:0.5px currentColor;">3</span>
<span class="t" style="left:727.8px;top:62px;font-size:29px;line-height:29px;color:#0a0a0a;letter-spacing:0.48px;-webkit-text-stroke:0.5px currentColor;">0.2</span>
<span class="t" style="left:975.6px;top:62px;font-size:29px;line-height:29px;color:#0a0a0a;letter-spacing:-0.04px;-webkit-text-stroke:0.5px currentColor;">$295,000 Est.</span>
<div class="b" style="left:1252px;top:40px;width:68px;height:68px;border:4.5px solid #22c55e;border-radius:50%"></div>
<span class="t" style="left:1269.1px;top:62px;font-size:29px;line-height:29px;color:#0a0a0a;letter-spacing:1.27px;-webkit-text-stroke:0.5px currentColor;">99</span>
<span class="t" style="left:1583.3px;top:62px;font-size:29px;line-height:29px;color:#0a0a0a;letter-spacing:0.73px;-webkit-text-stroke:0.5px currentColor;">2,080</span>
<span class="t" style="left:1796.4px;top:62px;font-size:29px;line-height:29px;color:#0a0a0a;-webkit-text-stroke:0.5px currentColor;transform:scaleX(0.9575);transform-origin:0 0;">Jun 19, 2006</span>
<span class="t" style="left:2084.3px;top:62px;font-size:29px;line-height:29px;color:#0a0a0a;-webkit-text-stroke:0.5px currentColor;transform:scaleX(0.9539);transform-origin:0 0;">Single Family</span>
</div>
<div class="b" style="left:2186px;top:98px;width:12px;height:118px;background:#d4d4d8;border-radius:0 0 6px 6px"></div>
<div class="b" style="left:6px;top:1254px;width:1598px;height:12px;background:#d4d4d8;border-radius:6px"></div>
</section>
<footer style="left:0;top:1504px;width:2272px;height:150px">
<span class="t" style="left:30.9px;top:43px;font-size:29px;line-height:29px;color:#737373;letter-spacing:-0.27px;-webkit-text-stroke:0.65px currentColor;">Displaying</span>
<div class="b" style="left:171px;top:32px;width:108px;height:48px;border:2px solid #e5e5e5;border-radius:13px;background:#fff"></div>
<span class="t" style="left:187.7px;top:43px;font-size:29px;line-height:29px;color:#0a0a0a;letter-spacing:1.18px;-webkit-text-stroke:0.65px currentColor;">50</span>
<svg class="i" style="left:220.7px;top:35.7px;width:40px;height:40px;" viewBox="0 0 24 24" fill="none" stroke="#0a0a0a" stroke-width="1.8" stroke-linecap="round" stroke-linejoin="round"><path d="m6 9 6 6 6-6"/></svg>
<span class="t" style="left:287.1px;top:43px;font-size:29px;line-height:29px;color:#737373;letter-spacing:0.27px;-webkit-text-stroke:0.65px currentColor;">out of 50,000+</span>
<div class="b" style="left:1984px;top:16px;width:80px;height:80px;background:#f5f5f5;border-radius:12px"></div>
<span class="t" style="left:2015.3px;top:43px;font-size:29px;line-height:29px;color:#0a0a0a;-webkit-text-stroke:0.65px currentColor;">1</span>
<span class="t" style="left:2103.4px;top:43px;font-size:29px;line-height:29px;color:#737373;-webkit-text-stroke:0.65px currentColor;">2</span>
<svg class="i" style="left:2172.0px;top:28.2px;width:56px;height:56px;" viewBox="0 0 24 24" fill="none" stroke="#737373" stroke-width="1" stroke-linecap="round" stroke-linejoin="round"><path d="m9 18 6-6-6-6"/></svg>
</footer>
</main>
</body>
</html>
